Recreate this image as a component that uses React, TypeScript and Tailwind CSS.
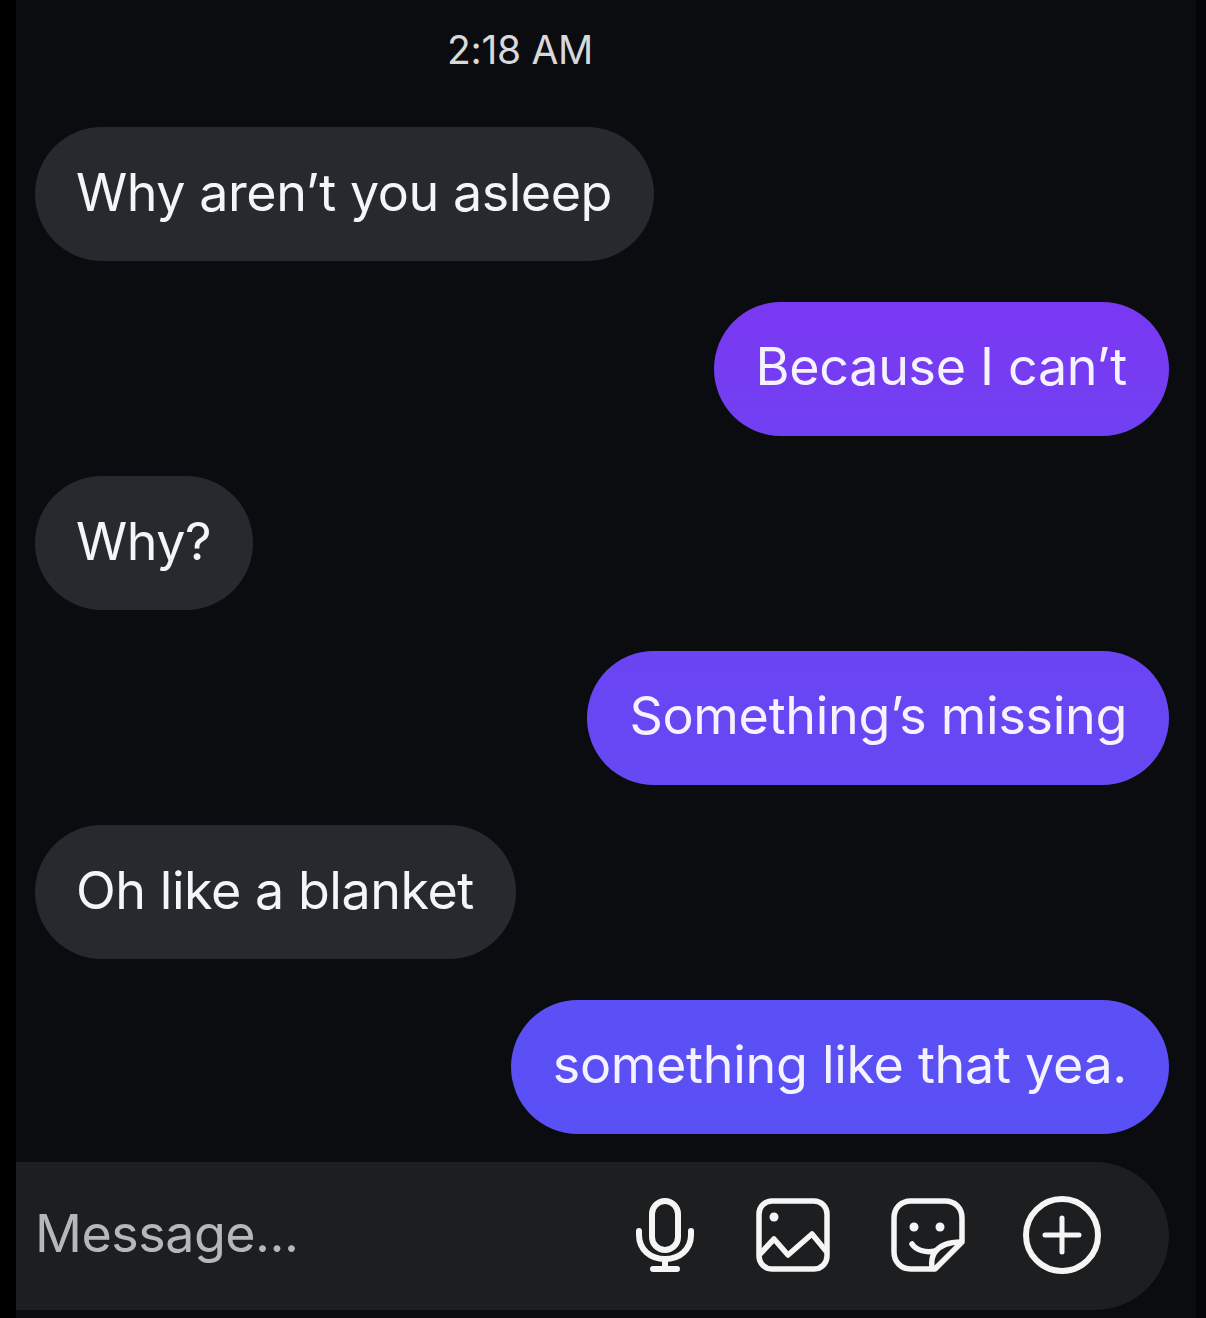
import React from 'react';

const font = 'font-["Inter","Liberation_Sans",sans-serif]';

const Incoming = ({ text }: { text: string }) => (
  <div className="flex justify-start">
    <div className="h-[134px] flex items-center pl-[41px] pr-[42px] pb-[3px] rounded-[67px] bg-[#26292e] text-[52px] tracking-[-0.45px] text-[#f4f5f6]">
      {text}
    </div>
  </div>
);

const Outgoing = ({ text, color }: { text: string; color: string }) => (
  <div className="flex justify-end">
    <div className={`h-[134px] flex items-center px-[42px] pb-[3px] rounded-[67px] text-[52px] tracking-[-0.3px] text-[#f4f2fe] ${color}`}>
      {text}
    </div>
  </div>
);

const MicIcon = () => (
  <svg width="58" height="74" viewBox="0 0 58 74" fill="none" stroke="#f5f5f5" strokeWidth="6" strokeLinecap="round" strokeLinejoin="round">
    <rect x="16" y="3" width="26" height="49" rx="13" />
    <path d="M3 33v4c0 14.500 11.500 24 26 24s26-9.500 26-24v-4" />
    <path d="M29 61v10M17 71h24" />
  </svg>
);

const ImageIcon = () => (
  <svg width="74" height="74" viewBox="0 0 74 74" fill="none" stroke="#f5f5f5" strokeWidth="5.500" strokeLinecap="round" strokeLinejoin="round">
    <rect x="3" y="3" width="68" height="68" rx="13" />
    <circle cx="18" cy="19" r="4.500" fill="#f5f5f5" stroke="none" />
    <path d="M4 56l14-15 14 16 24-21 14 17" />
  </svg>
);

const StickerIcon = () => (
  <svg width="74" height="74" viewBox="0 0 74 74" fill="none" stroke="#f5f5f5" strokeWidth="5.500" strokeLinecap="round" strokeLinejoin="round">
    <path d="M42 71H20C10 71 3 64 3 54V20C3 10 10 3 20 3h34c10 0 17 7 17 17v24L44 71z" />
    <path d="M41 70C40 62 41 58 44 54C50 46 60 44 70 44" />
    <circle cx="23" cy="29" r="4.500" fill="#f5f5f5" stroke="none" />
    <circle cx="49" cy="29" r="4.500" fill="#f5f5f5" stroke="none" />
    <path d="M21 46c4 6 13 9 23 7" />
  </svg>
);

const PlusIcon = () => (
  <svg width="78" height="78" viewBox="0 0 78 78" fill="none" stroke="#f5f5f5" strokeLinecap="round">
    <circle cx="39" cy="39" r="36" strokeWidth="6" />
    <path d="M39 22v34M22 39h34" strokeWidth="5" />
  </svg>
);

export default function App() {
  return (
    <div className={`w-[1206px] h-[1318px] overflow-hidden bg-[#0b0c10] flex ${font}`}>
      <div className="w-4 bg-black" />
      <div className="flex-1 flex flex-col">
        <div className="h-[100px] pt-[23px] pl-[431px] text-[39px] leading-[54px] tracking-[-0.3px] text-[#d8d9da]">2:18 AM</div>
        <div className="pt-[27px] pl-[19px] pr-[27px] flex flex-col gap-[40.6px]">
          <Incoming text="Why aren’t you asleep" />
          <Outgoing text="Because I can’t" color="bg-gradient-to-b from-[#7a38f2] to-[#7140f2]" />
          <Incoming text="Why?" />
          <Outgoing text="Something’s missing" color="bg-gradient-to-b from-[#6b44f3] to-[#6549f3]" />
          <Incoming text="Oh like a blanket" />
          <Outgoing text="something like that yea." color="bg-gradient-to-b from-[#5c4ff5] to-[#5850f5]" />
        </div>
        <div className="mt-[28px] mr-[27px] h-[148px] rounded-r-[74px] bg-[#1c1e20] flex items-center pl-[19px]">
          <span className="text-[52px] tracking-[-0.5px] pb-[3px] text-[#b5b8ba] w-[601px]">Message...</span>
          <div className="flex items-center pb-[1px]">
            <MicIcon />
            <div className="ml-[62px]"><ImageIcon /></div>
            <div className="ml-[61px]"><StickerIcon /></div>
            <div className="ml-[58px]"><PlusIcon /></div>
          </div>
        </div>
      </div>
      <div className="w-[10px] bg-[#050507]" />
    </div>
  );
}
